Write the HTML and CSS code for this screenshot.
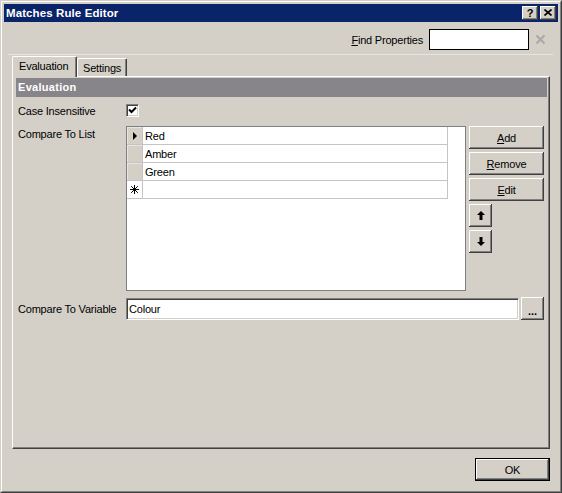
FILE: index.html
```html
<!DOCTYPE html>
<html>
<head>
<meta charset="utf-8">
<title>Matches Rule Editor</title>
<link rel="stylesheet" href="styles.css">
</head>
<body>
<div class="window">
  <div class="frame">
    <div class="titlebar">
      <span class="title">Matches Rule Editor</span>
      <div class="caption-buttons">
        <span class="cap-btn help">?</span>
        <span class="cap-btn close">
          <svg width="8" height="7" viewBox="0 0 8 7"><path d="M0.5 0.5 L7.5 6.5 M7.5 0.5 L0.5 6.5" stroke="#000" stroke-width="1.6" fill="none"/></svg>
        </span>
      </div>
    </div>
    <div class="body">
      <div class="find-row">
        <span class="find-label"><u>F</u>ind Properties</span>
        <div class="find-input"></div>
        <svg class="find-clear" width="11" height="11" viewBox="0 0 11 11"><path d="M1.5 1.5 L9.5 9.5 M9.5 1.5 L1.5 9.5" stroke="#a8a8a8" stroke-width="2" fill="none"/></svg>
      </div>
      <div class="separator"></div>
      <div class="tabs">
        <div class="tab active">Evaluation</div>
        <div class="tab">Settings</div>
      </div>
      <div class="panel">
        <div class="section-header">Evaluation</div>
        <div class="prop-row case-row">
          <span class="prop-label">Case Insensitive</span>
          <span class="checkbox">
            <svg width="9" height="9" viewBox="0 0 9 9"><path d="M1 3.5 L3.5 6 L8 1.5" stroke="#000" stroke-width="2" fill="none"/></svg>
          </span>
        </div>
        <div class="prop-row list-row">
          <span class="prop-label list-label">Compare To List</span>
          <div class="grid">
            <div class="grid-row">
              <div class="row-head"><span class="current-arrow"></span></div>
              <div class="cell">Red</div>
            </div>
            <div class="grid-row">
              <div class="row-head"></div>
              <div class="cell">Amber</div>
            </div>
            <div class="grid-row">
              <div class="row-head"></div>
              <div class="cell">Green</div>
            </div>
            <div class="grid-row new-row">
              <div class="row-head">
                <svg width="9" height="9" viewBox="0 0 9 9"><path d="M4.5 0 V9 M0 4.5 H9 M1.2 1.2 L7.8 7.8 M7.8 1.2 L1.2 7.8" stroke="#000" stroke-width="1" fill="none"/></svg>
              </div>
              <div class="cell"></div>
            </div>
          </div>
          <div class="grid-buttons">
            <button class="btn wide"><u>A</u>dd</button>
            <button class="btn wide"><u>R</u>emove</button>
            <button class="btn wide"><u>E</u>dit</button>
            <button class="btn square">
              <svg width="8" height="9" viewBox="0 0 8 9"><path d="M4 0 L8 4 H5.5 V9 H2.5 V4 H0 Z" fill="#000"/></svg>
            </button>
            <button class="btn square">
              <svg width="8" height="9" viewBox="0 0 8 9"><path d="M4 9 L8 5 H5.5 V0 H2.5 V5 H0 Z" fill="#000"/></svg>
            </button>
          </div>
        </div>
        <div class="prop-row var-row">
          <span class="prop-label">Compare To Variable</span>
          <div class="var-input">Colour</div>
          <button class="btn dots">...</button>
        </div>
      </div>
      <div class="footer">
        <button class="btn ok">OK</button>
      </div>
    </div>
  </div>
</div>
</body>
</html>
```

FILE: styles.css
```css
html, body {
  margin: 0;
  padding: 0;
  background: #d4d0c8;
}

body {
  font-family: "Liberation Sans", Arial, sans-serif;
  font-size: 11px;
  letter-spacing: -0.2px;
  color: #000;
}

.window {
  width: 562px;
  height: 493px;
  box-sizing: border-box;
  border: 1px solid;
  border-color: #d4d0c8 #404040 #404040 #d4d0c8;
  background: #d4d0c8;
}

.frame {
  height: 100%;
  box-sizing: border-box;
  border: 1px solid;
  border-color: #ffffff #808080 #808080 #ffffff;
  padding: 2px;
  display: flex;
  flex-direction: column;
}

/* Title bar */
.titlebar {
  height: 18px;
  flex: none;
  background: #0a246a;
  display: flex;
  align-items: center;
  justify-content: space-between;
  padding-left: 2px;
}

.title {
  color: #fff;
  font-weight: bold;
  font-size: 11.5px;
  letter-spacing: 0.1px;
}

.caption-buttons {
  display: flex;
  gap: 2px;
  padding-right: 2px;
}

.cap-btn {
  width: 16px;
  height: 14px;
  background: #d4d0c8;
  box-shadow: inset -1px -1px #404040, inset 1px 1px #ffffff, inset -2px -2px #808080;
  display: flex;
  align-items: center;
  justify-content: center;
  box-sizing: border-box;
  font-weight: bold;
  font-size: 11px;
  letter-spacing: 0;
  line-height: 14px;
}

.cap-btn.help {
  padding-bottom: 1px;
}

.cap-btn.close svg {
  margin-bottom: 1px;
}

/* Body */
.body {
  flex: 1;
  display: flex;
  flex-direction: column;
  padding: 7px 0 8px;
  min-height: 0;
}

.find-row {
  height: 21px;
  display: flex;
  align-items: center;
  justify-content: flex-end;
  padding-right: 12px;
}

.find-label {
  margin-right: 6px;
}

.find-input {
  width: 100px;
  height: 21px;
  box-sizing: border-box;
  border: 1px solid #000;
  background: #fff;
}

.find-clear {
  margin-left: 6px;
}

.separator {
  height: 1px;
  margin: 4px 5px 0 4px;
  background: #e6e4df;
}

/* Tabs */
.tabs {
  display: flex;
  align-items: flex-end;
  height: 21px;
  margin: 1px 8px -1px;
}

.tab {
  box-sizing: border-box;
  height: 18px;
  margin-bottom: 1px;
  border-top: 1px solid #fff;
  border-left: 1px solid #fff;
  border-right: 1px solid #404040;
  box-shadow: inset -1px 0 #808080;
  border-radius: 2px 2px 0 0;
  background: #d4d0c8;
  padding: 3px 0 0 5px;
  width: 50px;
}

.tab.active {
  position: relative;
  z-index: 1;
  height: 21px;
  margin-bottom: 0;
  width: 65px;
  padding: 3px 0 0 6px;
}

/* Panel */
.panel {
  flex: 1;
  margin: 0 8px;
  border-top: 1px solid #fff;
  border-left: 1px solid #fff;
  border-right: 1px solid #404040;
  border-bottom: 1px solid #404040;
  box-shadow: inset -1px -1px #808080;
  padding: 1px 2px 2px 3px;
  display: flex;
  flex-direction: column;
}

.section-header {
  height: 19px;
  line-height: 19px;
  background: #878589;
  color: #fff;
  font-weight: bold;
  letter-spacing: 0.3px;
  padding-left: 2px;
}

.prop-row {
  display: flex;
  padding-right: 3px;
}

.prop-label {
  width: 108px;
  padding-left: 2px;
  flex: none;
}

.case-row {
  margin-top: 7px;
  height: 13px;
  align-items: center;
}

.case-row .prop-label {
  padding-top: 1px;
}

.checkbox {
  width: 13px;
  height: 13px;
  box-sizing: border-box;
  background: #fff;
  border: 1px solid;
  border-color: #808080 #fff #fff #808080;
  box-shadow: inset 1px 1px #404040, inset -1px -1px #d4d0c8;
  display: flex;
  align-items: center;
  justify-content: center;
}

.list-row {
  margin-top: 9px;
  align-items: flex-start;
}

.list-label {
  padding-top: 2px;
}

.grid {
  width: 340px;
  height: 165px;
  box-sizing: border-box;
  border: 1px solid #808080;
  background: #fff;
  flex: none;
}

.grid-row {
  display: flex;
  height: 18px;
}

.row-head {
  width: 15px;
  height: 17px;
  border-right: 1px solid #c4c4c4;
  border-bottom: 1px solid #c4c4c4;
  background: #d4d0c8;
  box-shadow: inset 1px 1px #e8e6e2;
  display: flex;
  align-items: center;
  justify-content: center;
}

.new-row .row-head {
  background: #fff;
  box-shadow: none;
}

.current-arrow {
  width: 0;
  height: 0;
  border-left: 4px solid #000;
  border-top: 4px solid transparent;
  border-bottom: 4px solid transparent;
  margin-left: 1px;
}

.cell {
  width: 302px;
  height: 17px;
  line-height: 19px;
  padding-left: 2px;
  border-right: 1px solid #c4c4c4;
  border-bottom: 1px solid #c4c4c4;
}

.grid-buttons {
  margin-left: 3px;
  display: flex;
  flex-direction: column;
  gap: 3px;
}

.btn {
  font: inherit;
  letter-spacing: inherit;
  color: #000;
  margin: 0;
  padding: 0;
  border: 0;
  background: #d4d0c8;
  box-shadow: inset -1px -1px #404040, inset 1px 1px #ffffff, inset -2px -2px #808080;
  height: 23px;
  display: flex;
  align-items: center;
  justify-content: center;
  box-sizing: border-box;
}

.btn.wide {
  width: 75px;
}

.btn.square {
  width: 23px;
}

.var-row {
  margin-top: 6px;
  height: 23px;
  align-items: center;
}

.var-input {
  width: 393px;
  height: 22px;
  box-sizing: border-box;
  background: #fff;
  border: 1px solid;
  border-color: #808080 #fff #fff #808080;
  box-shadow: inset 1px 1px #404040, inset -1px -1px #d4d0c8;
  padding-left: 2px;
  line-height: 20px;
  margin-top: 1px;
}

.btn.dots {
  width: 23px;
  margin-left: 2px;
  font-weight: bold;
  letter-spacing: 0;
  align-items: flex-end;
  padding-bottom: 4px;
  line-height: 10px;
}

.footer {
  margin-top: 9px;
  display: flex;
  justify-content: flex-end;
  padding-right: 8px;
}

.btn.ok {
  width: 75px;
  border: 1px solid #000;
}
```
